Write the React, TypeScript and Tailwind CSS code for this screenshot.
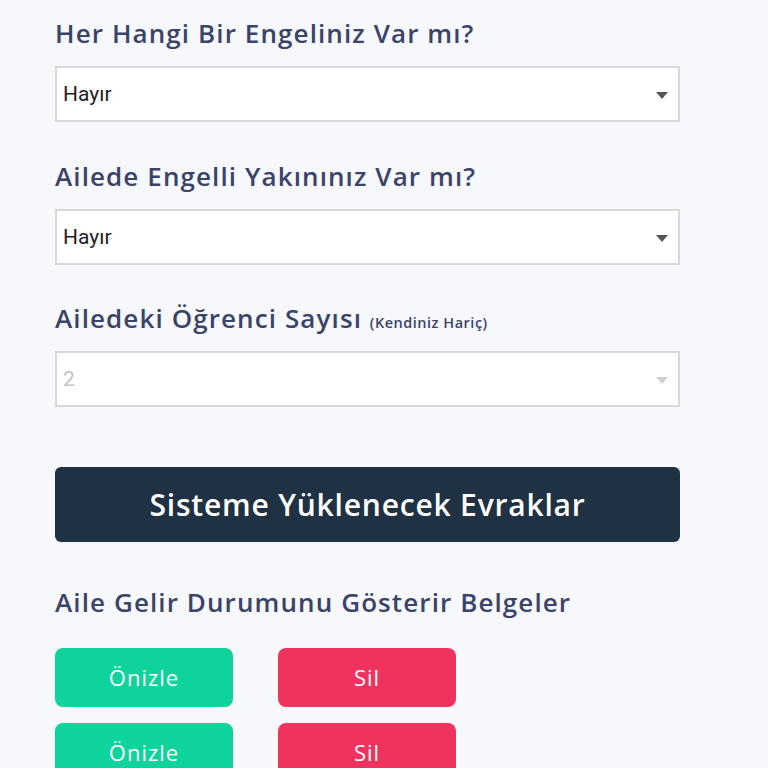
function Label({ children }: { children: React.ReactNode }) {
  return (
    <h2 className="text-[26px] leading-[32px] font-semibold tracking-[1.1px] text-[#3b4468] font-['Open_Sans',sans-serif]">
      {children}
    </h2>
  );
}

function Select({ value, disabled }: { value: string; disabled?: boolean }) {
  return (
    <div className="relative mt-[17px] h-[56px] w-[625px] border-2 border-[#d6d8db] bg-white">
      <span
        className={`absolute left-[6px] top-[13px] text-[21px] leading-[26px] font-['Roboto',sans-serif] ${
          disabled ? 'text-[#c4c4c4]' : 'text-[#222]'
        }`}
      >
        {value}
      </span>
      <svg
        className="absolute right-[10px] top-[24px]"
        width="12"
        height="7"
        viewBox="0 0 12 7"
      >
        <path d="M0 0h12L6 7z" fill={disabled ? '#d0d0d0' : '#555'} />
      </svg>
    </div>
  );
}

export default function App() {
  return (
    <div className="h-[768px] w-[768px] bg-[#f6f8fb] pl-[55px] pt-[17px] overflow-hidden">
      <Label>Her Hangi Bir Engeliniz Var mı?</Label>
      <Select value="Hayır" />

      <div className="mt-[38px]">
        <Label>Ailede Engelli Yakınınız Var mı?</Label>
      </div>
      <Select value="Hayır" />

      <div className="mt-[37px]">
        <Label>
          Ailedeki Öğrenci Sayısı{' '}
          <span className="text-[14.5px] leading-none tracking-[0.5px]">(Kendiniz Hariç)</span>
        </Label>
      </div>
      <Select value="2" disabled />

      <button className="mt-[60px] flex h-[75px] w-[625px] items-center justify-center rounded-[6px] bg-[#1f3244] text-[30px] font-semibold tracking-[0.8px] text-white font-['Open_Sans',sans-serif]">
        Sisteme Yüklenecek Evraklar
      </button>

      <div className="mt-[44px]">
        <Label>Aile Gelir Durumunu Gösterir Belgeler</Label>
      </div>

      <div className="mt-[30px] flex flex-col gap-[16px]">
        {[0, 1].map((i) => (
          <div key={i} className="flex gap-[45px]">
            <button className="h-[59px] w-[178px] shrink-0 rounded-[8px] bg-[#0fd39c] text-[22px] font-medium tracking-[1px] text-white font-['Open_Sans',sans-serif]">
              Önizle
            </button>
            <button className="h-[59px] w-[178px] shrink-0 rounded-[8px] bg-[#f0325e] text-[22px] font-medium tracking-[1px] text-white font-['Open_Sans',sans-serif]">
              Sil
            </button>
          </div>
        ))}
      </div>
    </div>
  );
}
